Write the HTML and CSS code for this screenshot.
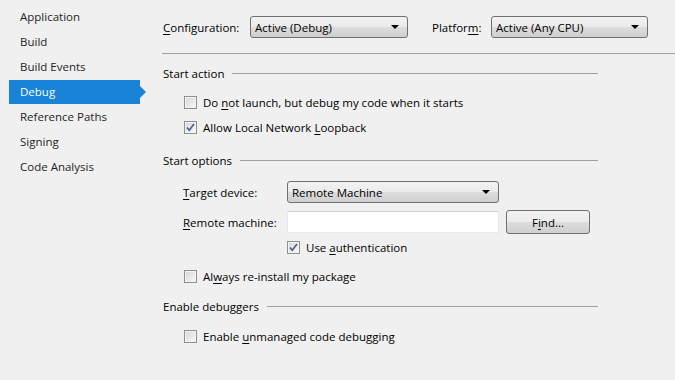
FILE: index.html
```html
<!DOCTYPE html>
<html lang="en">
<head>
    <meta charset="UTF-8">
    <title>Project Properties - Debug</title>
    <link rel="stylesheet" href="styles.css">
</head>
<body>
    <div class="page">
        <ul class="nav">
            <li class="nav-item">Application</li>
            <li class="nav-item">Build</li>
            <li class="nav-item">Build Events</li>
            <li class="nav-item active">Debug</li>
            <li class="nav-item">Reference Paths</li>
            <li class="nav-item">Signing</li>
            <li class="nav-item">Code Analysis</li>
        </ul>

        <div class="main">
            <div class="header">
                <span class="label config-label"><u>C</u>onfiguration:</span>
                <div class="combo config-combo">
                    <span>Active (Debug)</span>
                    <span class="arrow"></span>
                </div>
                <span class="label platform-label">Platfor<u>m</u>:</span>
                <div class="combo platform-combo">
                    <span>Active (Any CPU)</span>
                    <span class="arrow"></span>
                </div>
            </div>

            <div class="body">
                <div class="section-title first">Start action</div>
                <div class="check-row indent">
                    <span class="check"></span>
                    <span>Do <u>n</u>ot launch, but debug my code when it starts</span>
                </div>
                <div class="check-row indent">
                    <span class="check checked">
                        <svg viewBox="0 0 11 11" width="11" height="11"><path d="M2 5.5 L4.3 8.3 L9 2" fill="none" stroke="#4a5c8a" stroke-width="1.6"/></svg>
                    </span>
                    <span>Allow Local Network <u>L</u>oopback</span>
                </div>

                <div class="section-title options">Start options</div>
                <div class="field-row target-row">
                    <span class="field-label"><u>T</u>arget device:</span>
                    <div class="combo target-combo">
                        <span>Remote Machine</span>
                        <span class="arrow"></span>
                    </div>
                </div>
                <div class="field-row remote-row">
                    <span class="field-label"><u>R</u>emote machine:</span>
                    <div class="textbox"></div>
                    <div class="button">F<u>i</u>nd...</div>
                </div>
                <div class="check-row auth-row">
                    <span class="check checked">
                        <svg viewBox="0 0 11 11" width="11" height="11"><path d="M2 5.5 L4.3 8.3 L9 2" fill="none" stroke="#4a5c8a" stroke-width="1.6"/></svg>
                    </span>
                    <span>Use <u>a</u>uthentication</span>
                </div>
                <div class="check-row reinstall-row indent">
                    <span class="check"></span>
                    <span>Al<u>w</u>ays re-install my package</span>
                </div>

                <div class="section-title debuggers">Enable debuggers</div>
                <div class="check-row unmanaged-row indent">
                    <span class="check"></span>
                    <span>Enable <u>u</u>nmanaged code debugging</span>
                </div>
            </div>
        </div>
    </div>
</body>
</html>
```

FILE: styles.css
```css
* {
    margin: 0;
    padding: 0;
    box-sizing: border-box;
}

body {
    background: #f0f0f0;
    font-family: 'Open Sans', 'Noto Sans', sans-serif;
    font-size: 11.5px;
    color: #000;
    width: 675px;
    height: 380px;
    overflow: hidden;
}

u {
    text-decoration: underline;
    text-underline-offset: 2px;
}

.page {
    display: flex;
}

/* left navigation */
.nav {
    list-style: none;
    width: 162px;
    padding-top: 5px;
    flex-shrink: 0;
}

.nav-item {
    position: relative;
    margin-left: 9px;
    width: 131px;
    height: 24px;
    line-height: 24px;
    margin-bottom: 1px;
    padding-left: 11px;
    color: #1e1e1e;
}

.nav-item.active {
    background: #1883d7;
    color: #fff;
}

.nav-item.active::after {
    content: "";
    position: absolute;
    right: -6px;
    top: 6px;
    border-left: 6px solid #1883d7;
    border-top: 6px solid transparent;
    border-bottom: 6px solid transparent;
}

/* main area */
.main {
    flex: 1;
}

.header {
    display: flex;
    align-items: center;
    height: 22px;
    margin-top: 16px;
    padding-left: 1px;
}

.config-label {
    width: 87px;
}

.config-combo {
    width: 158px;
}

.platform-label {
    margin-left: 24px;
    width: 59px;
}

.platform-combo {
    width: 157px;
}

.combo {
    height: 22px;
    border: 1px solid #707070;
    border-radius: 3px;
    background: linear-gradient(#f2f2f2 0%, #ebebeb 50%, #dddddd 50%, #cfcfcf 100%);
    display: flex;
    align-items: center;
    justify-content: space-between;
    padding: 0 8px 0 4px;
}

.arrow {
    width: 0;
    height: 0;
    border-left: 4px solid transparent;
    border-right: 4px solid transparent;
    border-top: 4px solid #000;
}

.body {
    width: 436px;
    border-top: 1px solid #a0a0a0;
    margin-top: 15px;
    padding-left: 1px;
    position: relative;
}

.body::before {
    content: "";
    position: absolute;
    top: -1px;
    left: 436px;
    width: 100px;
    border-top: 1px solid #a0a0a0;
}

.section-title {
    display: flex;
    align-items: center;
    gap: 8px;
    height: 16px;
}

.section-title::after {
    content: "";
    flex: 1;
    border-top: 1px solid #a0a0a0;
    margin-top: 1px;
}

.section-title.first {
    margin-top: 11px;
}

.section-title.options {
    margin-top: 12px;
}

.section-title.debuggers {
    margin-top: 9px;
}

.indent {
    padding-left: 21px;
}

.check-row {
    display: flex;
    align-items: center;
    height: 25px;
    gap: 6px;
}

.section-title.first + .check-row {
    margin-top: 9px;
}

.check {
    width: 13px;
    height: 13px;
    border: 1px solid #8e8f8f;
    background: linear-gradient(135deg, #d6d6d6, #f9f9f9);
    box-shadow: inset 0 0 0 1px #f3f3f3;
    display: flex;
    align-items: center;
    justify-content: center;
    flex-shrink: 0;
}

.field-row {
    display: flex;
    align-items: center;
    padding-left: 20px;
}

.field-label {
    width: 104px;
    flex-shrink: 0;
}

.target-row {
    height: 22px;
    margin-top: 13px;
}

.target-combo {
    width: 212px;
}

.remote-row {
    height: 24px;
    margin-top: 7px;
}

.textbox {
    width: 212px;
    height: 22px;
    background: #fff;
    border: 1px solid #e3e9ef;
    border-top-color: #cdd3db;
}

.button {
    width: 84px;
    height: 24px;
    margin-left: 7px;
    border: 1px solid #707070;
    border-radius: 3px;
    background: linear-gradient(#f2f2f2 0%, #ebebeb 50%, #dddddd 50%, #cfcfcf 100%);
    display: flex;
    align-items: center;
    justify-content: center;
}

.auth-row {
    padding-left: 124px;
    height: 25px;
    margin-top: 1px;
}

.reinstall-row {
    margin-top: 4px;
}

.unmanaged-row {
    margin-top: 10px;
}
```
